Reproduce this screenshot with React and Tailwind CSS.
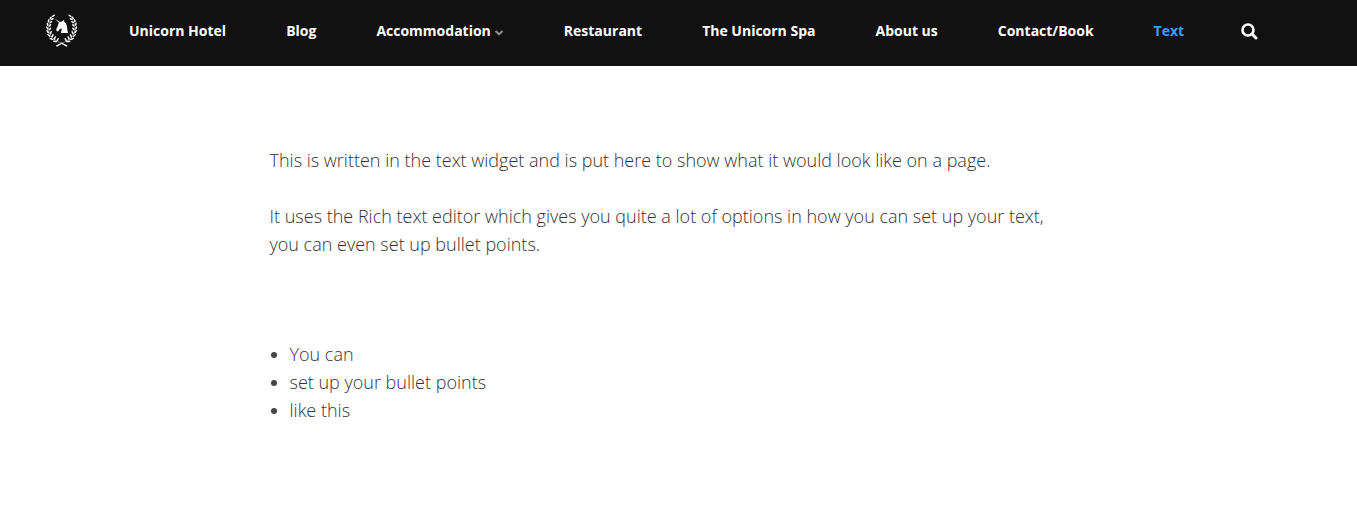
import React from "react";

const links = [
  { label: "Unicorn Hotel" },
  { label: "Blog" },
  { label: "Accommodation", menu: true },
  { label: "Restaurant" },
  { label: "The Unicorn Spa" },
  { label: "About us" },
  { label: "Contact/Book" },
  { label: "Text", active: true },
];

// Leaves of one laurel branch: x, y, rotation, length
const leaves = [
  [7.4, 1.9, -35, 1.9],
  [4.6, 4, -60, 1.7],
  [6.4, 5, -30, 1.5],
  [2.6, 6.8, -80, 1.8],
  [4.9, 8.1, -35, 1.6],
  [1.5, 10.2, 80, 1.8],
  [4, 11.4, -45, 1.7],
  [1.3, 14, 68, 1.9],
  [4, 15, -55, 1.8],
  [1.8, 17.8, 55, 2],
  [4.8, 18.6, -65, 2],
  [3, 21.5, 40, 2.2],
  [6.5, 21.8, -65, 2.1],
  [5.4, 24.9, 22, 2.3],
  [8.8, 24, -68, 2.1],
  [9, 27.4, 8, 2.3],
  [11.6, 25.8, -60, 2],
];

function Branch() {
  return (
    <g>
      {leaves.map(([x, y, r, l]) => (
        <ellipse key={`${x}-${y}`} cx={x} cy={y} rx={l} ry="0.8" transform={`rotate(${r} ${x} ${y})`} />
      ))}
      <path
        d="M6 4C2 9 1.600 16 4 20.500C6.500 25 11 27 15.500 29.200L20.800 32"
        fill="none"
        stroke="currentColor"
        strokeWidth="0.4"
      />
      <path d="M15 28.500L21.500 31.400L20.500 32.700L14.600 29.300Z" />
    </g>
  );
}

function Logo() {
  return (
    <svg className="h-[34px] w-8" viewBox="0 0 32 34" fill="currentColor" aria-hidden="true">
      <Branch />
      <g transform="matrix(-1 0 0 1 31.4 0)">
        <Branch />
      </g>
      <path d="M8.800 4.800L14 7.900L15.800 7.400L18.200 5.800L18 7.600C20.300 9.200 21 11.800 21.200 14C21.300 16 21.600 17.500 22.200 19H15.200C15 17.500 15.800 16.300 15.600 14.600C14.500 14.900 13.500 15.300 12.900 16.200L12.100 17.400L10.600 16.900L10.200 15.300L11.600 12.600L12.500 9.500L12.900 8.700Z" />
    </svg>
  );
}

export default function App() {
  return (
    <div className="bg-white font-['Open_Sans','Noto_Sans',sans-serif]">
      <header className="bg-[#111111] pb-1 text-white">
        <nav className="flex h-[62px] items-center pl-[46px]" aria-label="Main">
          <a href="#home" aria-label="Unicorn Hotel home">
            <Logo />
          </a>
          <ul className="ml-[51px] flex items-center gap-[60px] text-sm font-bold whitespace-nowrap">
            {links.map((link) => (
              <li key={link.label}>
                <a href="#page" className={link.active ? "flex items-center text-[#3b9ff3]" : "flex items-center"}>
                  {link.label}
                  {link.menu && (
                    <svg className="mt-1 ml-[3px] h-[6px] w-[10px] text-[#888888]" viewBox="0 0 10 6" aria-hidden="true">
                      <path d="M1.500 1L5 4.200L8.500 1" fill="none" stroke="currentColor" strokeWidth="2.200" />
                    </svg>
                  )}
                </a>
              </li>
            ))}
          </ul>
          <button type="button" className="ml-14" aria-label="Search">
            <svg className="size-[18px]" viewBox="0 0 18 18" fill="none" stroke="currentColor" aria-hidden="true">
              <circle cx="8" cy="8" r="5.500" strokeWidth="2.600" />
              <path d="M12 12L16 16" strokeWidth="3" strokeLinecap="round" />
            </svg>
          </button>
        </nav>
      </header>
      <main className="mx-auto max-w-[818px] pt-20 pb-20 text-lg/7 font-light text-[#333333]">
        <p>This is written in the text widget and is put here to show what it would look like on a page.</p>
        <p className="mt-7 max-w-[780px]">
          It uses the Rich text editor which gives you quite a lot of options in how you can set up your text, you can
          even set up bullet points.
        </p>
        <ul className="mt-[82px] list-disc pl-5 marker:text-[#444444]">
          <li>You can</li>
          <li>set up your bullet points</li>
          <li>like this</li>
        </ul>
      </main>
    </div>
  );
}
